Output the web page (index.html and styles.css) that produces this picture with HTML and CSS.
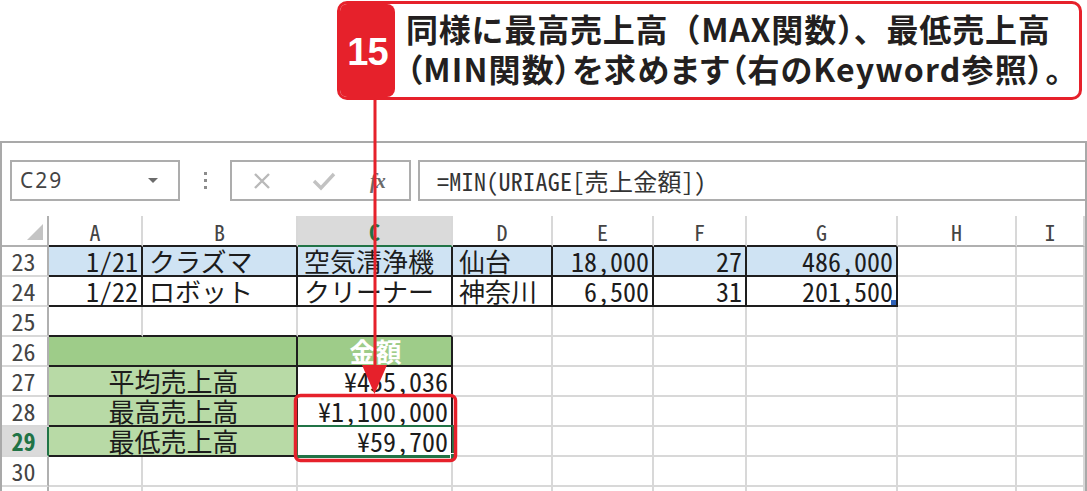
FILE: index.html
```html
<!DOCTYPE html>
<html lang="ja">
<head>
<meta charset="utf-8">
<title>MIN関数</title>
<link rel="stylesheet" href="styles.css">
</head>
<body>
<div class="callout">
  <div class="badge">15</div>
  <div class="msg">
    <p class="l1">同様に最高売上高（MAX関数）、最低売上高</p>
    <p class="l2">（MIN関数）を求めます（右のKeyword参照）。</p>
  </div>
</div>

<div class="window">
  <div class="fbar">
    <div class="namebox"><span class="ref">C29</span><span class="dd"></span></div>
    <div class="grip"><i></i><i></i><i></i></div>
    <div class="btns">
      <svg class="ico" width="20" height="20" viewBox="0 0 20 20"><path d="M3 3 L17 17 M17 3 L3 17" stroke="#b9b9b9" stroke-width="2.4" fill="none"/></svg>
      <svg class="ico" width="24" height="20" viewBox="0 0 24 20"><path d="M2 10 L9 17 L22 3" stroke="#c2c2c2" stroke-width="3.4" fill="none"/></svg>
      <span class="fx">fx</span>
    </div>
    <div class="formula">=MIN(URIAGE[売上金額])</div>
  </div>

  <div class="sheet">
    <!-- header row -->
    <div class="corner"><span class="tri"></span></div>
    <div class="ch kb">A</div>
    <div class="ch kb">B</div>
    <div class="ch act">C</div>
    <div class="ch kb">D</div>
    <div class="ch kb">E</div>
    <div class="ch kb">F</div>
    <div class="ch kb">G</div>
    <div class="ch hb">H</div>
    <div class="ch hb">I</div>

    <!-- 23 -->
    <div class="rh">23</div>
    <div class="k blue n r">1/21</div>
    <div class="k blue">クラズマ</div>
    <div class="k blue">空気清浄機</div>
    <div class="k blue">仙台</div>
    <div class="k blue n r">18,000</div>
    <div class="k blue n r">27</div>
    <div class="k blue n r">486,000</div>
    <div></div>
    <div></div>

    <!-- 24 -->
    <div class="rh">24</div>
    <div class="k n r">1/22</div>
    <div class="k">ロボット</div>
    <div class="k">クリーナー</div>
    <div class="k">神奈川</div>
    <div class="k n r">6,500</div>
    <div class="k n r">31</div>
    <div class="k n r">201,500</div>
    <div></div>
    <div></div>

    <!-- 25 -->
    <div class="rh">25</div>
    <div class="kb"></div>
    <div class="kb"></div>
    <div class="kb"></div>
    <div></div><div></div><div></div><div></div><div></div><div></div>

    <!-- 26 -->
    <div class="rh">26</div>
    <div class="k g1 span2"></div>
    <div class="k g1 hd">金額</div>
    <div></div><div></div><div></div><div></div><div></div><div></div>

    <!-- 27 -->
    <div class="rh">27</div>
    <div class="k g2 span2 ctr">平均売上高</div>
    <div class="k n r">¥455,036</div>
    <div></div><div></div><div></div><div></div><div></div><div></div>

    <!-- 28 -->
    <div class="rh">28</div>
    <div class="k g2 span2 ctr">最高売上高</div>
    <div class="k n r">¥1,100,000</div>
    <div></div><div></div><div></div><div></div><div></div><div></div>

    <!-- 29 -->
    <div class="rh ract">29</div>
    <div class="k g2 span2 ctr">最低売上高</div>
    <div class="k n r">¥59,700</div>
    <div></div><div></div><div></div><div></div><div></div><div></div>

    <!-- 30 -->
    <div class="rh">30</div>
    <div></div><div></div><div></div><div></div><div></div><div></div><div></div><div></div><div></div>

    <!-- 31 -->
    <div class="rh"></div>
    <div></div><div></div><div></div><div></div><div></div><div></div><div></div><div></div><div></div>

    <div class="tblh"></div>
    <div class="sel"><span class="fill"></span></div>
  </div>
</div>

<svg class="overlay" width="1087" height="491" viewBox="0 0 1087 491">
  <line x1="375" y1="99" x2="375" y2="368" stroke="#e6212b" stroke-width="3"/>
  <polygon points="362,365 387,365 374.5,394" fill="#e6212b"/>
  <rect x="295.5" y="395.5" width="160" height="65" rx="5" ry="5" fill="none" stroke="#e6212b" stroke-width="3.5"/>
</svg>
</body>
</html>
```

FILE: styles.css
```css
* { box-sizing: border-box; margin: 0; padding: 0; }

html, body {
  width: 1087px;
  height: 491px;
  overflow: hidden;
  background: #fff;
}

body {
  position: relative;
  font-family: "Noto Sans CJK JP", "Noto Sans", sans-serif;
  color: #222;
}

/* ---------- callout ---------- */
.callout {
  display: flex;
  margin: 1px 0 0 337px;
  width: 745px;
  height: 99px;
  border: 3px solid #e6212b;
  border-radius: 10px;
  overflow: hidden;
  background: #fff;
}

.badge {
  flex: none;
  width: 55px;
  background: #e6212b;
  border-radius: 0 8px 8px 0;
  color: #fff;
  font: 700 38px/1 "Liberation Sans", Arial, sans-serif;
  letter-spacing: -1px;
  display: flex;
  align-items: center;
  justify-content: center;
  padding-top: 2px;
}

.msg {
  padding: 4px 0 0 11px;
  font-size: 32px;
  line-height: 40px;
  font-weight: 700;
  color: #231f20;
  white-space: nowrap;
}

.msg .l1 { letter-spacing: 0.8px; }

.msg .l2 {
  font-feature-settings: "palt" 1;
  letter-spacing: 1.2px;
}

/* ---------- excel window ---------- */
.window {
  margin-top: 41px;
  height: 360px;
  border: 2px solid #a9a9a9;
  border-bottom: none;
  overflow: hidden;
}

.fbar {
  display: flex;
  height: 41px;
  margin: 17px 0 15px 8px;
}

.namebox {
  flex: none;
  width: 170px;
  border: 2px solid #adadad;
  display: flex;
  align-items: center;
  justify-content: space-between;
  padding: 0 20px 0 8px;
}

.ref {
  font: 21px/1 "Noto Sans", sans-serif;
  letter-spacing: 2px;
  color: #444;
}

.dd {
  width: 0;
  height: 0;
  border-left: 5px solid transparent;
  border-right: 5px solid transparent;
  border-top: 5px solid #6b6b6b;
}

.grip {
  flex: none;
  width: 50px;
  display: flex;
  flex-direction: column;
  align-items: center;
  justify-content: center;
  gap: 4px;
}

.grip i {
  display: block;
  width: 3px;
  height: 3px;
  background: #8c8c8c;
}

.btns {
  flex: none;
  width: 181px;
  border: 2px solid #adadad;
  display: flex;
  align-items: center;
  padding-left: 20px;
}

.btns .ico:first-of-type { margin-right: 40px; }
.btns .ico + .ico { margin-right: 34px; }

.fx {
  font: italic 700 20px/1 "Liberation Serif", serif;
  color: #6a6a6a;
  letter-spacing: -1px;
}

.formula {
  flex: 1;
  margin-left: 7px;
  border: 2px solid #adadad;
  border-right: none;
  display: flex;
  align-items: center;
  padding-left: 17px;
  font-size: 24px;
  letter-spacing: 0.3px;
  color: #333;
  font-feature-settings: "hwid" 1;
  white-space: nowrap;
}

/* ---------- sheet ---------- */
.sheet {
  position: relative;
  display: grid;
  grid-template-columns: 47px 94px 155px 155px 100px 101px 93px 151px 119px 1fr;
  grid-template-rows: 31px repeat(9, 30px);
}

.sheet > div {
  border-right: 2px solid #d8d8d8;
  border-bottom: 2px solid #d8d8d8;
  font-size: 26px;
  line-height: 26px;
  color: #1c1c1c;
  padding: 0 4px 0 6px;
  white-space: nowrap;
  display: flex;
  align-items: center;
}

.sheet > .corner {
  justify-content: flex-end;
  align-items: flex-end;
  padding: 0 4px 5px 0;
  border-right-color: #b0b0b0;
  border-bottom-color: #b0b0b0;
}

.tri {
  width: 0;
  height: 0;
  border-left: 16px solid transparent;
  border-bottom: 16px solid #c4c4c4;
}

.sheet > .ch {
  justify-content: center;
  font-size: 22px;
  line-height: 22px;
  color: #444;
  font-feature-settings: "hwid" 1;
  padding: 0;
}

.sheet > .hb { border-bottom-color: #b0b0b0; }

.sheet > .act {
  background: #dadada;
  color: #217346;
  font-weight: 700;
  border-bottom: 2px solid #217346;
}

.sheet > .rh {
  justify-content: center;
  font-size: 24px;
  line-height: 24px;
  color: #444;
  font-feature-settings: "hwid" 1;
  padding: 0 2px 0 0;
  border-right-color: #b0b0b0;
}

.sheet > .ract {
  background: #dadada;
  color: #217346;
  font-weight: 700;
  border-right: 2px solid #217346;
}

.sheet > .k {
  border-right-color: #1e1e1e;
  border-bottom-color: #1e1e1e;
}

.sheet > .kb { border-bottom-color: #1e1e1e; }

.sheet > .blue { background: #cfe3f3; }
.sheet > .g1 { background: #9ecc89; }
.sheet > .g2 { background: #b8daa6; }

.sheet > .n { font-feature-settings: "hwid" 1; }
.sheet > .r { justify-content: flex-end; padding: 0 3px 0 4px; }
.sheet > .ctr { justify-content: center; }

.sheet > .hd {
  justify-content: center;
  color: #fff;
  font-weight: 700;
}

.span2 { grid-column: span 2; }

.sheet > .tblh {
  position: absolute;
  left: 889px;
  top: 84px;
  width: 5px;
  height: 5px;
  padding: 0;
  border: none;
  background: #2f62b8;
}

.sheet > .sel {
  position: absolute;
  left: 294px;
  top: 209px;
  width: 158px;
  height: 33px;
  padding: 0;
  border: 2px solid #217346;
  border-bottom-width: 3px;
}

.fill {
  position: absolute;
  right: -5px;
  bottom: -5px;
  width: 7px;
  height: 7px;
  background: #217346;
  border: 1px solid #fff;
}

/* ---------- overlay arrow / highlight ---------- */
.overlay {
  position: absolute;
  left: 0;
  top: 0;
  pointer-events: none;
}
```
